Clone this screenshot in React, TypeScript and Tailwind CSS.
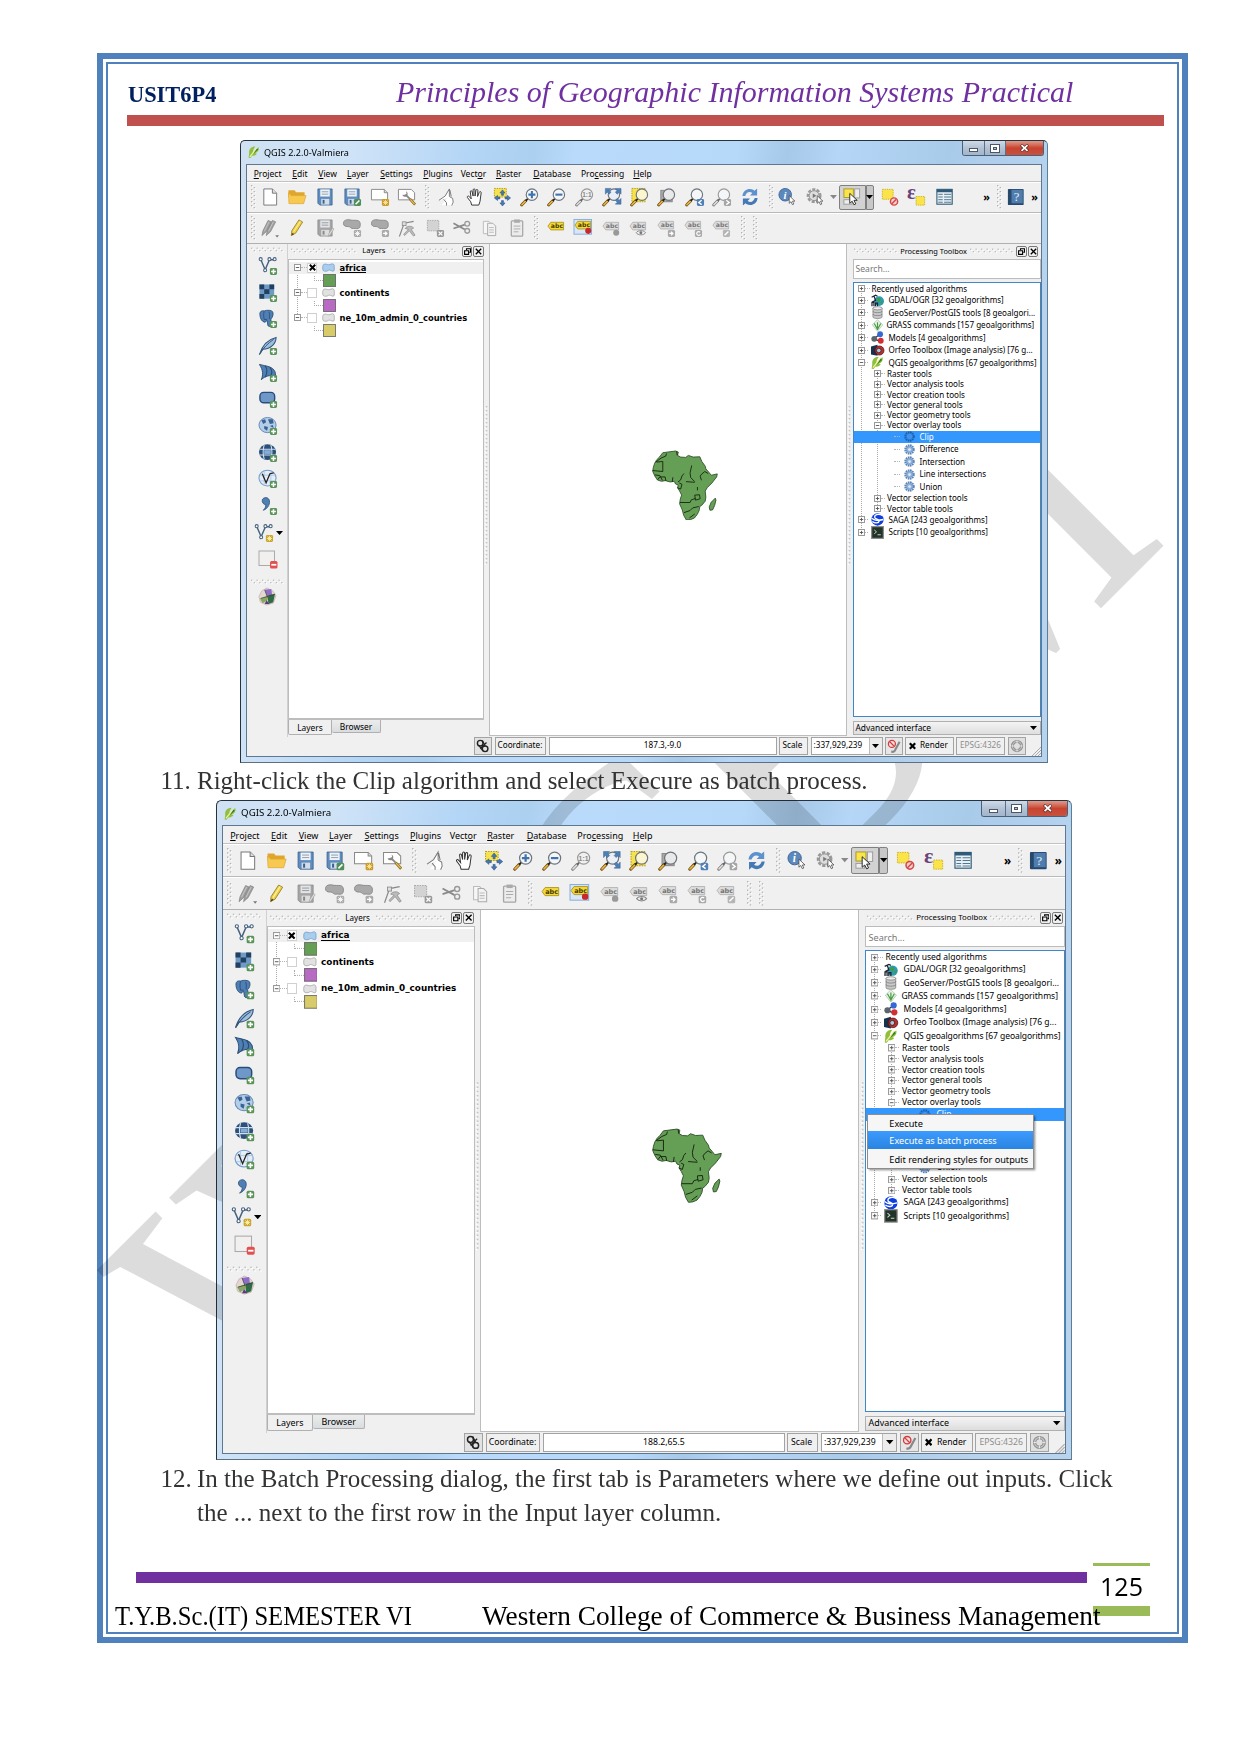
import React from 'react';

type Kids = { children?: React.ReactNode };

/* ---------- small shared drawing helpers ---------- */

function Ico({ children, s = 20 }: Kids & { s?: number }) {
  return (
    <svg viewBox="0 0 20 20" width={s} height={s} className="block shrink-0 overflow-visible" fill="none">
      {children}
    </svg>
  );
}

function VGrip({ className = '' }: { className?: string }) {
  return (
    <svg width="5" height="24" viewBox="0 0 5 24" className={'block shrink-0 ' + className}>
      {[0, 1, 2, 3, 4, 5].map((i) => (
        <g key={i}>
          <rect x="0" y={i * 4} width="1.4" height="1.4" fill="#b5b5b5" />
          <rect x="1" y={i * 4 + 1} width="1.2" height="1.2" fill="#fff" />
          <rect x="2.6" y={i * 4 + 2} width="1.4" height="1.4" fill="#b5b5b5" />
          <rect x="3.6" y={i * 4 + 3} width="1.2" height="1.2" fill="#fff" />
        </g>
      ))}
    </svg>
  );
}

function HGrip({ n }: { n: number }) {
  return (
    <svg width={n * 5.5} height="6" viewBox={`0 0 ${n * 5.5} 6`} className="block shrink-0">
      {Array.from({ length: n }, (_, i) => (
        <g key={i}>
          <rect x={i * 5.5} y="0.6" width="1.3" height="1.3" fill="#bcbcbc" />
          <rect x={i * 5.5 + 1.2} y="1.7" width="1.3" height="1.3" fill="#fff" />
          <rect x={i * 5.5 + 2.7} y="3" width="1.3" height="1.3" fill="#bcbcbc" />
          <rect x={i * 5.5 + 3.8} y="4" width="1.3" height="1.3" fill="#fff" />
        </g>
      ))}
    </svg>
  );
}

function Splitter() {
  return (
    <svg width="3" height="160" viewBox="0 0 3 160" className="block">
      {Array.from({ length: 40 }, (_, i) => (
        <g key={i}>
          <rect x="0.8" y={i * 4} width="1.5" height="1.5" fill="#c4c4c4" />
          <rect x="0" y={i * 4 + 1.5} width="1.4" height="1.2" fill="#fff" />
        </g>
      ))}
    </svg>
  );
}

const Down = ({ c = '#000' }: { c?: string }) => (
  <svg width="7" height="4" viewBox="0 0 7 4" className="block shrink-0">
    <path d="M0 0h7L3.500 4z" fill={c} />
  </svg>
);

const Cursor = () => <path d="M10.500 8.500v8.500l2-1.800 1.500 3.300 1.600-.7-1.500-3.200h2.700z" fill="#fff" stroke="#444" strokeWidth=".8" />;
const Handle = ({ g }: { g?: boolean }) => (
  <>
    <path d="M1.200 18.500 5.500 14" stroke={g ? '#777' : '#6b4b10'} strokeWidth="3" strokeLinecap="round" />
    <path d="M1.500 18.200 5 14.600" stroke={g ? '#ddd' : '#e9b63f'} strokeWidth="1.700" strokeLinecap="round" />
    <path d="M5.500 14 8 11.500" stroke={g ? '#666' : '#222'} strokeWidth="1.800" />
  </>
);
const Lens = ({ f = '#f4f6f8', g }: { f?: string; g?: boolean }) => (
  <>
    <Handle g={g} />
    <circle cx="12" cy="7.500" r="6" fill={f} stroke={g ? '#999' : '#6d747b'} strokeWidth="1.200" />
  </>
);
const Badge = ({ c, children }: Kids & { c: string }) => (
  <>
    <rect x="12" y="12" width="7.500" height="7.500" rx="1.500" fill={c} />
    {children}
  </>
);
const Plus = () => (
  <Badge c="#5a9459">
    <path d="M15.750 13.300v5M13.300 15.750h5" stroke="#fff" strokeWidth="1.600" />
  </Badge>
);
const Floppy = ({ g }: { g?: boolean }) => (
  <>
    <path d="M2.500 1.500h15v17h-13l-2-2z" fill={g ? '#a5a5a5' : '#5f8cbf'} stroke={g ? '#8a8a8a' : '#3d618c'} strokeWidth=".8" />
    <rect x="5" y="2" width="10" height="7.500" fill={g ? '#e4e4e4' : '#eef3f8'} />
    <path d="M6.500 4.500h7M6.500 7h7" stroke="#8795a5" strokeWidth=".9" />
    <rect x="6" y="12" width="8.500" height="6" fill={g ? '#ddd' : '#d3dde8'} />
    <rect x="7.500" y="13" width="2" height="4" fill={g ? '#888' : '#3d618c'} />
  </>
);
const Tag = ({ c, s }: { c: string; s: string }) => (
  <>
    <path d="M1.500 7 4.500 3h13.500v8H4.500z" fill={c} stroke={s} strokeWidth=".8" />
    <text x="4.600" y="9.300" fontSize="6.500" fontWeight="700" fill={s === '#aaa' ? '#777' : '#4a3c00'} fontFamily="DejaVu Sans, sans-serif">
      abc
    </text>
  </>
);
const Blob = ({ f, s }: { f: string; s: string }) => (
  <path d="M1 5.500C1 2 4 .8 7 2c2.500 1 4.500.8 7-.3 3.500-1.500 5.500.8 5 4.300v5c-.5 2.500-3 2-5 .8-2.300-1.200-4-.8-5.500.5C5 13.500.8 13 1 9.500z" fill={f} stroke={s} strokeWidth=".9" />
);
const GreyBlob = () => (
  <path d="M1 5C1 1.500 5 .8 8 1.500c3 .7 5 .2 7.500.5 3.500.5 3.500 4 3 6.500-.4 2-3 2.500-5 2-1.500-.4-2 .5-3.500 0C8.500 10 8 8.500 6 8.500 3 8.500 1 8 1 5z" fill="#a9a9a9" stroke="#858585" strokeWidth=".9" />
);

/* ---------- toolbar icons ---------- */

const fileRow = [
  <Ico key="n"><path d="M3.500 1.500h9l4.500 4.500v12.500H3.500z" fill="#fff" stroke="#777" /><path d="M12.500 1.500V6H17" fill="#ddd" stroke="#777" /></Ico>,
  <Ico key="o"><path d="M1 3h6.500l1.500 2h9v5H1z" fill="#dfa52d" /><path d="M1.500 17 1 5.500l3 3h15.500l-2.500 8.500z" fill="#f8c950" stroke="#dca634" strokeWidth=".7" /></Ico>,
  <Ico key="s"><Floppy /></Ico>,
  <Ico key="sa"><Floppy /><Badge c="#4f8f5a"><path d="m13.800 17.700 4-4" stroke="#fff" strokeWidth="1.600" /></Badge></Ico>,
  <Ico key="c"><path d="M1 2h13.500l3.500 3.500V13H1z" fill="#fff" stroke="#888" /><path d="M14.500 2v3.500H18" stroke="#888" fill="#ddd" /><Badge c="#c99a2b"><path d="M15.750 13v5.500M13 15.750h5.500M13.800 13.800l4 4M17.800 13.800l-4 4" stroke="#ffe9a0" strokeWidth=".9" /></Badge></Ico>,
  <Ico key="cm"><path d="M1 2h13.500l3.500 3.500V13H1z" fill="#fff" stroke="#888" /><path d="M5 8a3 3 0 1 0 4-4l.5 2.500-2 1z" fill="#888" /><path d="m9 8 4 4" stroke="#888" strokeWidth="2" /><path d="m13 12 5.500 6" stroke="#8a6a20" strokeWidth="2.800" /><path d="m13.500 12.500 4.500 5" stroke="#efc14d" strokeWidth="1.300" /></Ico>,
];

const navRow = [
  <Ico key="t"><path d="M4.500 18.500 11 10 7 12l-5 1 6-4 5-7v8l3.500 2 .5 6.500z" fill="#fff" /><path d="M1.500 13.500 8 9l4.500-7.500v8M9.500 19v-3L6.500 12.500M12.500 9.500 16 11.500l.5 4-1.500 3.500M13 2.500l1.500 7" stroke="#777" strokeWidth="1" /></Ico>,
  <Ico key="p"><path d="M6.500 18.500 5.500 15 2 10.500c-.5-1.500 1-2 2-1L6 12 5 4.500c0-1.500 1.800-1.500 2 0L8 9V2.500c.2-1.500 2-1.500 2 0V9l1-6c.3-1.300 1.900-1.200 2 0l-.3 6.500L14.500 5c.5-1.200 2-.8 2 .5l-1.200 9L14 18.500z" fill="#fff" stroke="#333" /></Ico>,
  <Ico key="ps"><rect x="2" y="1" width="12.500" height="9" fill="#f6e24c" stroke="#b79c18" strokeDasharray="1.500 1" /><path d="m10.500 2.500 2.700 3.300h-1.700v2.400h-2V5.800H7.800zM10.500 19.500l2.700-3.300h-1.700v-2.400h-2v2.400H7.800zM2 11l3.300-2.700V10h2.400v2H5.300v1.700zM19 11l-3.300-2.700V10h-2.400v2h2.400v1.700z" fill="#4678b4" stroke="#2d5588" strokeWidth=".6" /></Ico>,
  <Ico key="zi"><Lens /><path d="M12 3.800v7.400M8.300 7.500h7.400" stroke="#3f73b0" strokeWidth="2.200" /></Ico>,
  <Ico key="zo"><Lens /><path d="M8.300 7.500h7.400" stroke="#3f73b0" strokeWidth="2.200" /></Ico>,
  <Ico key="z1"><Lens g f="#f0f0f0" /><text x="7" y="10" fontSize="6.800" fontWeight="700" fill="#888" fontFamily="Liberation Sans, sans-serif">1:1</text></Ico>,
  <Ico key="zf"><Lens f="#eaf0f6" /><path d="M3 1h6L7 3l2 2-2 2-2-2-2 2zM19.500 1h-6l2 2-2 2 2 2 2-2 2 2zM19.500 17.500h-6l2-2-2-2 2-2 2 2 2-2z" fill="#4f7fb8" stroke="#35618f" strokeWidth=".5" /></Ico>,
  <Ico key="zs"><rect x="1.500" y="1" width="14" height="14" fill="#f6e24c" stroke="#b79c18" strokeDasharray="1.500 1" /><Lens f="#fbf6cf" /></Ico>,
  <Ico key="zl"><rect x="3.500" y="3" width="12" height="12" fill="#aaa" stroke="#888" /><Lens f="#e9e9e9" /></Ico>,
  <Ico key="zp"><Lens /><Badge c="#4f80b8"><path d="m17 13.500-3 2.250 3 2.250" stroke="#fff" strokeWidth="1.400" /></Badge></Ico>,
  <Ico key="zn"><Lens g /><Badge c="#a5a5a5"><path d="m14.500 13.500 3 2.250-3 2.250" stroke="#fff" strokeWidth="1.400" /></Badge></Ico>,
  <Ico key="r"><path d="M2 9c.5-5 4-7.500 8-7.500 2 0 3.500.8 4.800 1.800L17.500 1v7.500H10l2.500-2.700C9 3.500 6 5.500 5 9z" fill="#5b92cd" /><path d="M18 11c-.5 5-4 7.500-8 7.500-2 0-3.500-.8-4.800-1.800L2.500 19v-7.500H10l-2.500 2.700c3.500 2.300 6.500.3 7.500-3.200z" fill="#4379b5" /></Ico>,
];

const editRow = [
  <Ico key="pp"><path d="m1.500 18 1-5L8 2l3.500 1.500L6 14zM6 18l1-5 5.500-11L16 3.500 10.500 14z" fill="#a0a0a0" stroke="#808080" strokeWidth=".7" /><path d="m4 13.500 5-10M8.500 13.500l5-10" stroke="#c4c4c4" /><path d="M15.500 17.500h4L17.500 20z" fill="#777" /></Ico>,
  <Ico key="pe"><path d="m4 18 .5-5L12 1.500l4 2.200L8.500 15.500z" fill="#f0d143" stroke="#8b7420" strokeWidth=".8" /><path d="m6.500 14 7-11" stroke="#fff6b0" /><path d="m4 18 1.200-2.800 1.800 1z" fill="#333" /></Ico>,
  <Ico key="sv"><Floppy g /><path d="m13.500 19 .5-3 4-6 1.500 1-4 6z" fill="#ddd" stroke="#999" strokeWidth=".6" /></Ico>,
  <Ico key="ad"><GreyBlob /><Badge c="#aaa"><path d="M15.750 13v5.500M13 15.750h5.500M13.800 13.800l4 4M17.800 13.800l-4 4" stroke="#fff" strokeWidth=".9" /></Badge></Ico>,
  <Ico key="mv"><GreyBlob /><Badge c="#aaa"><path d="M13.300 15.750h4m-2-2 2 2-2 2" stroke="#fff" strokeWidth="1.300" /></Badge></Ico>,
  <Ico key="nd"><path d="M2 19 7 5l10-2" stroke="#888" strokeWidth="1.200" /><rect x="5" y="3.500" width="4" height="4" fill="#ddd" stroke="#888" strokeWidth=".8" /><path d="M8 10.500c2-3 7-3 9-.5l-2.500 1.500 4 6-1.700 1-4.300-5.500-5 5-1-1.500 5-5z" fill="#bbb" stroke="#888" strokeWidth=".7" /></Ico>,
  <Ico key="dl"><rect x="2" y="2" width="12" height="11" fill="#d3d3d3" stroke="#aaa" strokeDasharray="1.500 1" /><Badge c="#999"><path d="m13.800 13.800 4 4m0-4-4 4" stroke="#fff" strokeWidth="1.300" /></Badge></Ico>,
  <Ico key="cu"><path d="m1 5 12 6.500M1 10.500l12-4" stroke="#8a8a8a" strokeWidth="1.800" /><circle cx="15.500" cy="5.500" r="2.500" stroke="#999" strokeWidth="1.400" /><circle cx="15.500" cy="13" r="2.500" stroke="#999" strokeWidth="1.400" /></Ico>,
  <Ico key="co"><path d="M3 3h6l3 3v10H3z" fill="#f6f6f6" stroke="#bbb" /><path d="M7.500 5h5.500l3 3v10H7.500z" fill="#f3f3f3" stroke="#aaa" /><path d="M9 9.500h5M9 12h5M9 14.500h5" stroke="#bbb" /></Ico>,
  <Ico key="pa"><rect x="4" y="2.500" width="12" height="16" rx="1" fill="#ececec" stroke="#a5a5a5" strokeWidth="1.300" /><rect x="7" y="1" width="6" height="3.500" fill="#aaa" /><path d="M6.500 8h7M6.500 11h7M6.500 14h5" stroke="#aaa" /></Ico>,
];

const labelRow = [
  <Ico key="1"><g transform="translate(0 1)"><Tag c="#f3d93a" s="#a58a16" /></g></Ico>,
  <Ico key="2"><rect x=".5" y="1" width="18.500" height="15.500" fill="#d9e6f6" stroke="#83aede" /><Tag c="#f3d93a" s="#a58a16" /><circle cx="15.500" cy="13" r="3.200" fill="#c8282c" /></Ico>,
  <Ico key="3"><g transform="translate(0 1)"><Tag c="#ddd" s="#aaa" /></g><circle cx="15.500" cy="15" r="3.200" fill="#999" /></Ico>,
  <Ico key="4"><g transform="translate(0 1)"><Tag c="#ddd" s="#aaa" /></g><path d="M8 15c2-3 8-3 10 0-2 3-8 3-10 0z" fill="#eee" stroke="#888" /><circle cx="13" cy="15" r="1.500" fill="#777" /></Ico>,
  <Ico key="5"><Tag c="#ddd" s="#aaa" /><Badge c="#aaa"><path d="M13.300 15.750h4m-2-2 2 2-2 2" stroke="#fff" strokeWidth="1.300" /></Badge></Ico>,
  <Ico key="6"><Tag c="#ddd" s="#aaa" /><Badge c="#aaa"><path d="M17.500 14.500a2 2 0 1 0 .3 2" stroke="#fff" strokeWidth="1.200" /></Badge></Ico>,
  <Ico key="7"><Tag c="#ddd" s="#aaa" /><Badge c="#b5b5b5"><path d="m13.800 17.700 4-4" stroke="#fff" strokeWidth="1.400" /></Badge></Ico>,
];

const Vee = ({ c = '#44617f' }: { c?: string }) => (
  <>
    <path d="M2.500 3.500 7 14l4.500-10.500H17" stroke={c} strokeWidth="1.500" />
    <g fill="#fff" stroke={c} strokeWidth="1.100">
      <circle cx="2.300" cy="2.800" r="1.600" /><circle cx="11.500" cy="2.800" r="1.600" /><circle cx="17" cy="2.800" r="1.600" /><circle cx="7" cy="14.500" r="1.600" />
    </g>
  </>
);

const sideRow = [
  <Ico key="v"><Vee /><Plus /></Ico>,
  <Ico key="r"><path d="M1 1h15.500v15H1z" fill="#6f9ac8" /><path d="M1 1h5v5H1zM11.500 1h5v5h-5zM6 6h5.500v5H6zM1 11h5v5H1z" fill="#23405f" /><Plus /></Ico>,
  <Ico key="p"><path d="M1.500 6C1 2 3 1 6 1.500c3-1.200 8-.8 9 1 1 3-.3 6-2 7.500l.8 7c-1.500 1.500-3.600 1-4-.5l-.6-4.500H8l-1 1.500C3.500 13 2 10 1.500 6z" fill="#4f80b5" stroke="#2b4d74" strokeWidth=".9" /><path d="M6 2c-1 3-.5 6 0 8.500h3M11 2.500c1.200 2.500.5 5 .5 7.500" stroke="#2b4d74" strokeWidth=".9" /><Plus /></Ico>,
  <Ico key="f"><path d="M1 19C4 9 10 3 18.500 1c0 6-5 12-14 12.500z" fill="#9fbede" stroke="#34567d" strokeWidth="1.100" /><path d="M1 19C5 12 10 7 16 3" stroke="#34567d" /><Plus /></Ico>,
  <Ico key="m"><path d="M1 1c8 2 14 2 16.500 8l.5 4c-6-1-11 0-15 4C5 12 5 7 1 1z" fill="#4f80b5" stroke="#2b4d74" /><path d="M7 2.500c3 4 2 8 0 12M12 4c3 4 2 6 1 9" stroke="#2b4d74" strokeWidth="1.200" /><Plus /></Ico>,
  <Ico key="o"><rect x="1.500" y="3" width="15.500" height="11" rx="4" fill="#6f97c8" stroke="#284d7c" strokeWidth="1.500" /><Plus /></Ico>,
  <Ico key="w"><ellipse cx="9.500" cy="9" rx="9" ry="8" fill="#b4cde8" stroke="#6289b5" /><path d="m3 4 4-1 1 3-3 2zM10 3h5l1 4-4 1zM6 10l4 1-1 4-3-2zM12 10l3-1 1 3z" fill="#3b6292" /><Plus /></Ico>,
  <Ico key="g"><ellipse cx="9.500" cy="9" rx="9" ry="8.300" fill="#2c5078" /><path d="M1 6h17M1 12h17M6 1.500c-1.500 5-1.500 10 0 15M13 1.500c1.500 5 1.500 10 0 15" stroke="#cfe0f2" strokeWidth="1.100" /><rect x="6" y="7" width="7" height="4" fill="#86add8" /><Plus /></Ico>,
  <Ico key="wf"><ellipse cx="9.500" cy="9" rx="9" ry="8.300" fill="#e5eef8" stroke="#6f9bcb" strokeWidth="1.100" /><path d="M1 6h17M1 12h17M6 1v16M13 1v16" stroke="#a4c1e0" strokeWidth=".8" /><path d="M4 4.500 8 14l4-9.500 4-1" stroke="#222" strokeWidth="1.300" /><Plus /></Ico>,
  <Ico key="d"><path d="M4 3.500C5 1 9 0 11 3c2 4-1 10-6 11.500 2-2 3-4 2.500-6C5 8.500 3.500 6 4 3.500z" fill="#4f80b5" stroke="#2b4d74" strokeWidth=".8" /><Plus /></Ico>,
];

/* ---------- window pieces ---------- */

const BarButtons = () => (
  <div className="mr-[4px] flex h-[15px] overflow-hidden rounded-b-[3px] border border-t-0 border-[#4c5f78]">
    <div className="flex w-[22px] items-end justify-center border-r border-[#5b6f88] bg-gradient-to-b from-[#cfdae8] via-[#b3c2d5] to-[#a3b5ca] pb-[3px]">
      <div className="h-[4px] w-[9px] border border-[#4b5666] bg-white" />
    </div>
    <div className="flex w-[21px] items-center justify-center border-r border-[#5b6f88] bg-gradient-to-b from-[#cfdae8] via-[#b3c2d5] to-[#a3b5ca]">
      <div className="flex h-[9px] w-[10px] items-center justify-center border border-[#4b5666] bg-white">
        <div className="h-[3px] w-[4px] border border-[#4b5666] bg-[#b3c2d5]" />
      </div>
    </div>
    <div className="flex w-[37px] items-center justify-center bg-gradient-to-b from-[#dd9a8c] via-[#c8432f] to-[#c55240]">
      <svg width="9" height="8" viewBox="0 0 9 8"><path d="m1 .8 7 6.400M8 .8 1 7.200" stroke="#5b2a2a" strokeWidth="3" /><path d="m1.500 1.200 6 5.600M7.500 1.200l-6 5.600" stroke="#fff" strokeWidth="1.700" /></svg>
    </div>
  </div>
);

const QLogo = ({ s = 12 }: { s?: number }) => (
  <Ico s={s}><path d="M2 12C1 6 5 1 12 1l-3 5-1 6 6-8 4-2c1 6-3 9-6 10l3 1c-3 3-6 4-8 3l-3 4-3-.5z" fill="#8fbf3c" /><path d="M3 18 15 3" stroke="#f3f0a0" strokeWidth="2" /><path d="M9 13 15 4l2 2z" fill="#2f7a35" /></Ico>
);

const menus: [string, string, string, string][] = [
  ['', 'P', 'roject', 'w-[38.600px]'],
  ['', 'E', 'dit', 'w-[26px]'],
  ['', 'V', 'iew', 'w-[28.700px]'],
  ['', 'L', 'ayer', 'w-[33.300px]'],
  ['', 'S', 'ettings', 'w-[43px]'],
  ['', 'P', 'lugins', 'w-[37.400px]'],
  ['Vect', 'o', 'r', 'w-[35.300px]'],
  ['', 'R', 'aster', 'w-[37.300px]'],
  ['', 'D', 'atabase', 'w-[47.700px]'],
  ['Pro', 'c', 'essing', 'w-[52.300px]'],
  ['', 'H', 'elp', 'w-[30px]'],
];

const Slot = ({ children }: Kids) => <div className="flex w-[27.500px] shrink-0 items-center justify-center">{children}</div>;

const Chevrons = () => <span className="text-[11px] font-bold leading-none text-black">»</span>;

function Toolbars() {
  return (
    <>
      <div className="flex h-[31px] items-center border-b border-t border-b-[#b9b9b9] border-t-white">
        <div className="flex w-[9px] shrink-0 justify-end"><VGrip /></div>
        {fileRow.map((x, i) => <Slot key={i}><div className="scale-95">{x}</div></Slot>)}
        <div className="flex w-[12.700px] shrink-0 justify-center"><VGrip /></div>
        {navRow.map((x, i) => <Slot key={i}><div className="scale-95">{x}</div></Slot>)}
        <div className="flex w-[10px] shrink-0 justify-end"><VGrip /></div>
        <Slot>
          <Ico s={18}><circle cx="8" cy="7.500" r="7" fill="#5b88bd" stroke="#3f6796" /><text x="6" y="12" fontSize="12" fontStyle="italic" fontWeight="700" fill="#fff" fontFamily="Liberation Serif, serif">i</text><g transform="translate(2 0)"><Cursor /></g></Ico>
        </Slot>
        <Slot>
          <Ico s={18}><circle cx="9" cy="8.500" r="7" stroke="#999" strokeWidth="2.500" strokeDasharray="3.500 1.500" /><circle cx="9" cy="8.500" r="5.500" fill="#ddd" stroke="#888" /><path d="M7.500 6v5l4-2.500z" fill="#777" /><g transform="translate(2 0)"><Cursor /></g></Ico>
        </Slot>
        <div className="flex w-[9px] shrink-0 justify-center"><Down c="#888" /></div>
        <div className="ml-px flex h-[25px] w-[27px] shrink-0 items-center justify-center rounded-l-[2px] border border-[#808080] bg-[#d2d2d2]">
          <Ico s={18}><rect x="1" y="1" width="10.500" height="9.500" fill="#f8e54b" stroke="#a89326" /><rect x="13" y="1" width="5.500" height="10" fill="#eee" stroke="#999" /><rect x="1" y="13" width="9" height="5" fill="#eee" stroke="#999" /><path d="M7.500 6v11l2.700-2.300 2 4 2-1-2-4h3.600z" fill="#fff" stroke="#222" /></Ico>
        </div>
        <div className="flex h-[25px] w-[8.500px] shrink-0 items-center justify-center rounded-r-[2px] border border-[#808080] bg-[#c8c8c8]"><Down /></div>
        <div className="w-[2px] shrink-0" />
        <Slot>
          <Ico s={18}><rect x="1.500" y="1.500" width="12" height="11" fill="#fbe44a" stroke="#cdb021" strokeDasharray="1.500 1" /><circle cx="14.500" cy="15" r="4" fill="#f6cfcf" stroke="#d34848" strokeWidth="1.600" /><path d="m12 17.500 5-5" stroke="#d34848" strokeWidth="1.600" /></Ico>
        </Slot>
        <Slot>
          <Ico s={18}><text x="-1" y="12.500" fontSize="23" fontWeight="700" fill="#6b4379" fontFamily="Liberation Serif, serif">ε</text><rect x="9" y="9.500" width="9.500" height="9.500" fill="#fbe44a" stroke="#cdb021" strokeDasharray="1.500 1" /></Ico>
        </Slot>
        <Slot>
          <Ico s={18}><rect x="1" y="1.500" width="17" height="16.500" fill="#e9f0f5" stroke="#2f5a78" strokeWidth="1.200" /><path d="M1 3.200h17" stroke="#2f5a78" strokeWidth="3" /><path d="M2.500 7h5M2.500 10h5M2.500 13h5M2.500 15.800h5M9 7h8M9 10h8M9 13h8M9 15.800h8" stroke="#52788f" strokeWidth="1.100" /></Ico>
        </Slot>
        <div className="ml-[24.500px] w-[12px] shrink-0"><Chevrons /></div>
        <div className="ml-[1.500px] w-[9px] shrink-0"><VGrip /></div>
        <div className="ml-[1.500px] shrink-0">
          <Ico s={18}><rect x="1" y="1" width="17.500" height="18" rx="1" fill="#27496b" /><rect x="5" y="2" width="12.500" height="15" fill="#4f7dad" /><text x="7.500" y="14.500" fontSize="14" fill="#e8f1fa" fontFamily="Liberation Serif, serif">?</text></Ico>
        </div>
        <div className="ml-[6px] shrink-0"><Chevrons /></div>
      </div>
      <div className="flex h-[31px] items-center border-b border-t border-b-[#b0b0b0] border-t-white">
        <div className="flex w-[9px] shrink-0 justify-end"><VGrip /></div>
        {editRow.map((x, i) => <Slot key={i}><div className="scale-95">{x}</div></Slot>)}
        <div className="flex w-[11.200px] shrink-0 justify-center"><VGrip /></div>
        {labelRow.map((x, i) => <Slot key={i}><div className="scale-95">{x}</div></Slot>)}
        <div className="ml-[6px] flex gap-[7px]"><VGrip /><VGrip /></div>
      </div>
    </>
  );
}

const DockButtons = () => (
  <div className="flex gap-px">
    <div className="flex h-[10.500px] w-[10.500px] items-center justify-center rounded-[2px] border border-[#777]">
      <svg width="7" height="7" viewBox="0 0 7 7" fill="none"><path d="M2.500 2V.8h4v3.500H5.200" stroke="#000" strokeWidth="1.100" /><path d="M.6 2.800h4v3.600h-4z" stroke="#000" strokeWidth="1.100" /></svg>
    </div>
    <div className="flex h-[10.500px] w-[10.500px] items-center justify-center rounded-[2px] border border-[#777]">
      <svg width="7" height="7" viewBox="0 0 7 7"><path d="m.8.8 5.400 5.400M6.200.8.800 6.200" stroke="#000" strokeWidth="1.300" /></svg>
    </div>
  </div>
);

const Expander = ({ minus }: { minus?: boolean }) => (
  <svg width="7" height="7" viewBox="0 0 7 7" className="relative block shrink-0 bg-white" fill="none">
    <rect x=".5" y=".5" width="6" height="6" stroke="#9a9a9a" />
    <path d={minus ? 'M1.800 3.500h3.400' : 'M1.800 3.500h3.400M3.500 1.800v3.400'} stroke="#555" strokeWidth=".9" />
  </svg>
);

const Dots = ({ className }: { className: string }) => <div className={'shrink-0 border-t border-dotted border-[#b5b5b5] ' + className} />;

function LayerItem({ name, color, checked, current }: { name: string; color: string; checked?: boolean; current?: boolean }) {
  return (
    <div className="h-[25px]">
      <div className={'flex h-[12.500px] items-center pl-[5px] ' + (current ? 'bg-[#f0f0f0]' : '')}>
        <Expander minus />
        <Dots className="w-[6px]" />
        <div className="flex h-[10px] w-[10px] shrink-0 items-center justify-center border border-[#d0d0d0] bg-white">
          {checked && <svg width="7" height="7" viewBox="0 0 7 7"><path d="m.8.8 5.400 5.400M6.200.8.800 6.200" stroke="#000" strokeWidth="2" /></svg>}
        </div>
        <div className="ml-[5px] mr-[4.500px]">
          <svg width="13" height="9" viewBox="0 0 20 14" className="block overflow-visible"><Blob f={current ? '#a8cdee' : '#e2e2e2'} s={current ? '#5f8db8' : '#8e8e8e'} /></svg>
        </div>
        <span className={"mt-px whitespace-nowrap font-['DejaVu_Sans',sans-serif] text-[8.350px] font-bold leading-[8.500px] " + (current ? 'border-b border-black' : '')}>{name}</span>
      </div>
      <div className="flex h-[12.500px] items-center pl-[25px]">
        <div className="h-[5px] w-[9px] -translate-y-[2px] border-b border-l border-dotted border-[#aaa]" />
        <svg width="13" height="13" viewBox="0 0 13 13" className="block"><rect x=".5" y=".5" width="12" height="12" fill={color} stroke="#555" strokeOpacity=".75" /></svg>
      </div>
    </div>
  );
}

const Gear = ({ hi }: { hi?: boolean }) => (
  <Ico s={11}>
    <circle cx="10" cy="10" r="8" stroke={hi ? '#1c5fae' : '#5a85bb'} strokeWidth="3" strokeDasharray="3 1.200" />
    <circle cx="10" cy="10" r="6" fill={hi ? '#3e93ee' : '#90b3dc'} stroke={hi ? '#1c5fae' : '#4a76ac'} />
    <circle cx="10" cy="10" r="2.500" fill={hi ? '#3e93ee' : '#dfeaf6'} />
  </Ico>
);

const providerIcons: Record<string, React.ReactNode> = {
  gdal: <Ico s={13}><circle cx="12.500" cy="11" r="7.500" fill="#2f9ab0" /><path d="m8 8 5-3 2 4-3 4zM15 12l4-1-2 5z" fill="#3f9b4a" /><path d="M1.500 19v-6h3v6M7 19v-5h3v5M1 5l6-3 3 1.500M5 4l2 6-5 2" stroke="#1b2430" strokeWidth="1.900" /></Ico>,
  db: <Ico s={13}><path d="M3 3v14c0 3 14 3 14 0V3z" fill="#c9c9c9" stroke="#6e6e6e" /><ellipse cx="10" cy="3.500" rx="7" ry="2.500" fill="#eee" stroke="#6e6e6e" /><path d="M3 8c0 3 14 3 14 0M3 12.500c0 3 14 3 14 0" stroke="#6e6e6e" /></Ico>,
  grass: <Ico s={13}><path d="m10 1 8 8-8 10L2 9z" fill="#eaf4e6" stroke="#9bbf95" /><path d="M10 17V5M10 16 5 7M10 16l5-9" stroke="#4b9a48" strokeWidth="1.800" /></Ico>,
  models: <Ico s={13}><path d="M4 12 14 5M5 12l9 4" stroke="#333" strokeWidth="2" /><circle cx="5" cy="12" r="4.500" fill="#5b6570" /><circle cx="14" cy="5" r="4.500" fill="#3569d6" /><circle cx="15" cy="15" r="4.500" fill="#d32f35" /></Ico>,
  orfeo: <Ico s={13}><path d="M0 4 10 1v17L0 16z" fill="#17324d" /><circle cx="13" cy="10" r="7" fill="#c32a2a" stroke="#341111" /><circle cx="12" cy="10" r="3.500" fill="#a8c6de" stroke="#111" /></Ico>,
  qgis: <QLogo s={13} />,
  saga: <Ico s={13}><circle cx="10" cy="10" r="9.500" fill="#0d3ee0" /><path d="M18 4C11 0 4 3 6 7.500c1.500 2.500 7 1.500 6.500 5C12 16 6 16 2 13M1 8c5 4 9 4 18 2" stroke="#fff" strokeWidth="2" /></Ico>,
  scripts: <Ico s={13}><rect x="1" y="1" width="18" height="18" fill="#223328" stroke="#8a8a8a" strokeWidth="1.800" /><path d="m5 6 3.500 3L5 12M10 13.500h5" stroke="#c9d8cb" strokeWidth="1.500" /></Ico>,
};

const Root = ({ icon, label, minus, tight }: { icon: string; label: string; minus?: boolean; tight?: boolean }) => (
  <div className="flex h-[12.500px] items-center pl-[4px]">
    <Expander minus={minus} /><Dots className="mr-[3px] w-[3px]" />
    {providerIcons[icon]}
    <span className={'whitespace-pre ' + (tight ? 'ml-[3px]' : 'ml-[5px]')}>{label}</span>
  </div>
);
const Group = ({ label, minus }: { label: string; minus?: boolean }) => (
  <div className="flex h-[10.300px] items-center pl-[20px]">
    <Expander minus={minus} /><Dots className="mr-[2.500px] w-[4px]" /><span className="whitespace-pre">{label}</span>
  </div>
);
const Leaf = ({ label, hi }: { label: string; hi?: boolean }) => (
  <div className={'flex h-[12.500px] items-center pl-[40px] ' + (hi ? 'bg-[#3397fd] text-white' : '')}>
    <Dots className="mr-[4px] w-[6px]" /><Gear hi={hi} /><span className="ml-[5px] whitespace-pre">{label}</span>
  </div>
);

const Africa = () => (
  <svg width="66" height="70" viewBox="95 62 196 208" className="block" fill="#659f56" stroke="#2b4a26" strokeWidth="2.500" strokeLinejoin="round">
    <path d="M127 70 165 65l8 3-2 10 9 5 15 1 8-6 14 5 20-1 6 14 10 14 2 8 8 9 8 10 18-4-2 9-14 18-14 14-6 10 2 18-2 12-10 12-6 4-2 12-6 12-8 10-12 5-12 1-8-14-4-16-8-18 2-14 4-12-6-12-6-10 2-8-8-3-4-8-12 2-14-4-12 2-12-4-8-12-6-14 2-12 4-12 6-10 8-8z" />
    <path d="m283 205 2 6-4 16-6 13-8 1-2-10 6-14z" />
    <path d="M138 72l-2 8-14 6-16 12M97 123l30 3 0-30-18 2M104 136l14 2 8 14M112 150l6-8 16 0 2 12M155 157l2-14M172 157l8-6 4-12 6-7M168 66l2 12M213 108l-5 22 2 14 12 12M222 158l-26-2M242 134l10-8 10 6M242 152l-4-12 4-6M230 172l0 10M176 160l8 4-4 14-10-4M222 196l14-1 2 12-14 4zM178 218l30 0 4-8 12-4M190 248l18-6 8-8 18-4M206 264l16-12" fill="none" stroke="#16210f" strokeWidth="2.600" />
  </svg>
);

const Cell = ({ children, className = '' }: Kids & { className?: string }) => (
  <div className={'flex h-[18px] shrink-0 items-center border border-[#a3a3a3] text-[8.200px] ' + className}>{children}</div>
);

function ContextMenu() {
  return (
    <div className="absolute left-[614px] top-[296px] h-[52px] w-[157.500px] border border-[#8d8d8d] bg-[#f6f6f6] text-[8.650px] shadow-[2px_2px_2px_rgba(0,0,0,0.45)]">
      <div className="flex h-[15.500px] items-center pl-[20px]">Execute</div>
      <div className="flex h-[16.500px] items-center bg-gradient-to-b from-[#3c9bff] to-[#2a84e0] pl-[20px] text-white">Execute as batch process</div>
      <div className="flex h-[19px] items-center whitespace-nowrap pl-[20px] pt-px">Edit rendering styles for outputs</div>
    </div>
  );
}

function QgisWindow({ coord, menu, glass }: { coord: string; menu?: boolean; glass?: boolean }) {
  return (
    <div className="relative h-[622.500px] w-[807.500px] font-['Noto_Sans','Open_Sans',sans-serif] text-[8.050px] leading-none text-black">
      <div className={'absolute inset-0 rounded-t-[5px] border border-[#27323f] border-b-[#5d6f80] border-r-[#5d7f95] bg-[linear-gradient(100deg,#cfe1f3_0px,#cfe3f7_110px,#b3d5f6_230px,#acd0f0_290px,#b9dafa_330px,#b7d9f9_490px,#a6c8e9_540px,#b5d6f6_590px,#a9cbea_700px,#b7d3ee_807px)] ' + (glass ? 'mix-blend-multiply' : '')} />
      <div className="relative flex h-full flex-col px-[6px] pb-[6px] pt-px">
        <div className="flex h-[22.500px] justify-between">
          <div className="flex items-center gap-[4.500px] pl-[1.500px]"><QLogo /><span className="text-[9.100px]">QGIS 2.2.0-Valmiera</span></div>
          <div className="-mr-[6px]"><BarButtons /></div>
        </div>
        <div className="flex min-h-0 flex-1 flex-col border border-[#60788f] bg-[#f0f0f0]">
          <div className="flex h-[17px] items-center border-b border-[#c2c2c2] pl-[6.700px] pt-[2.500px] text-[8.500px]">
            {menus.map(([a, u, b, w], i) => <div key={i} className={'shrink-0 ' + w}>{a}<span className="underline decoration-1 underline-offset-1">{u}</span>{b}</div>)}
          </div>
          <Toolbars />
          <div className="flex min-h-0 flex-1">
            <div className="flex w-[41px] shrink-0 flex-col items-center border-r border-[#d0d0d0] pl-px pt-[3px]">
              <HGrip n={6} />
              <div className="flex flex-col items-center">
                {sideRow.map((x, i) => <div key={i} className="flex h-[26.700px] items-center"><div className="scale-95">{x}</div></div>)}
                <div className="flex h-[26.700px] items-center gap-[2px] pl-[2px]">
                  <div className="scale-95"><Ico><Vee /><Badge c="#c9a52b"><path d="M15.750 13v5.500M13 15.750h5.500M13.800 13.800l4 4M17.800 13.800l-4 4" stroke="#fff3b8" strokeWidth=".9" /></Badge></Ico></div>
                  <Down />
                </div>
                <div className="flex h-[26.700px] items-center"><Ico><rect x="1" y="2" width="15.500" height="14.500" fill="#f2f0ee" stroke="#aaa" /><Badge c="#e35050"><path d="M13.300 15.750h5" stroke="#fff" strokeWidth="1.700" /></Badge></Ico></div>
              </div>
              <div className="mt-[6px]"><HGrip n={6} /></div>
              <div className="mt-[2.500px]"><Ico s={19}><path d="m9.500 1 6 3 3.500 5-3 8-7 2-6.500-3L1 10l3-6z" fill="#e4d6d3" stroke="#c5a8a8" strokeWidth=".7" /><path d="m7 3 7-1 1 8-5 1z" fill="#8f6cc9" /><path d="m10 9 8-2-2 9-5 2z" fill="#2f6b45" /><path d="m2 12 9-3-1 5-5 3z" fill="#86a860" /><path d="M9 14l3 4-5 0z" fill="#5a3a86" /><path d="m7 3 3 8M3 12l14-4" stroke="#3c3c3c" strokeWidth=".7" /></Ico></div>
            </div>
            <div className="flex w-[196px] shrink-0 flex-col">
              <div className="flex h-[15.500px] shrink-0 items-center justify-between pl-[3px]">
                <HGrip n={12} /><span className="text-[7.600px]">Layers</span><HGrip n={12} /><DockButtons />
              </div>
              <div className="relative h-[460.500px] shrink-0 border border-b-2 border-[#bdbdbd] bg-white pt-[1.500px]">
                <div className="absolute left-[8px] top-[6px] h-[52px] border-l border-dotted border-[#aaa]" />
                <div className="relative">
                  <LayerItem name="africa" color="#659f56" checked current />
                  <LayerItem name="continents" color="#b76bc2" />
                  <LayerItem name="ne_10m_admin_0_countries" color="#d8cb69" />
                </div>
              </div>
              <div className="flex items-start">
                <div className="flex h-[15.500px] w-[44px] items-center justify-center rounded-b-[2px] border border-t-0 border-[#b0b0b0] pt-[2px] text-[8.400px]">Layers</div>
                <div className="flex h-[13.500px] w-[49px] items-center justify-center rounded-b-[2px] border border-l-0 border-t-0 border-[#b0b0b0] bg-gradient-to-b from-[#ececec] to-[#d9dde0] pt-[2px] text-[8.400px]">Browser</div>
              </div>
            </div>
            <div className="flex w-[5px] shrink-0 justify-center pt-[162px]"><Splitter /></div>
            <div className="h-[492px] w-[357.500px] shrink-0 border-x border-b border-[#bdbdbd] bg-white pl-[161.500px] pt-[206px]"><Africa /></div>
            <div className="flex w-[6px] shrink-0 justify-center pt-[162px]"><Splitter /></div>
            <div className="flex min-w-0 flex-1 flex-col">
              <div className="flex h-[15.500px] shrink-0 items-center justify-between pl-px pr-[2px]">
                <HGrip n={8} /><span className="whitespace-nowrap text-[7.400px]">Processing Toolbox</span><HGrip n={8} /><DockButtons />
              </div>
              <div className="flex h-[19.500px] shrink-0 items-center border border-[#bcbcbc] bg-white pl-[2px] pt-[2px] text-[8.600px] text-[#777]">Search...</div>
              <div className="relative mt-[3px] h-[435.500px] shrink-0 overflow-hidden border border-[#3f86cd] bg-white pt-px">
                <div className="absolute left-[7px] top-[6px] h-[243px] border-l border-dotted border-[#aaa]" />
                <div className="absolute left-[23px] top-[90px] h-[136px] border-l border-dotted border-[#aaa]" />
                <div className="relative">
                  <div className="flex h-[10.300px] items-center pl-[4px]"><Expander /><Dots className="mr-[2px] w-[5px]" />Recently used algorithms</div>
                  <Root icon="gdal" label="GDAL/OGR [32 geoalgorithms]" />
                  <Root icon="db" label="GeoServer/PostGIS tools [8 geoalgori..." />
                  <Root icon="grass" label="GRASS commands [157 geoalgorithms]" tight />
                  <Root icon="models" label="Models [4 geoalgorithms]" />
                  <Root icon="orfeo" label="Orfeo Toolbox (Image analysis) [76 g..." />
                  <div className="tracking-[-0.08px]"><Root icon="qgis" label="QGIS geoalgorithms [67 geoalgorithms]" minus /></div>
                  <Group label="Raster tools" />
                  <Group label="Vector analysis tools" />
                  <Group label="Vector creation tools" />
                  <Group label="Vector general tools" />
                  <Group label="Vector geometry tools" />
                  <Group label="Vector overlay tools" minus />
                  <Leaf label="Clip" hi />
                  <Leaf label="Difference" />
                  <Leaf label="Intersection" />
                  <Leaf label="Line intersections" />
                  <Leaf label="Union" />
                  <Group label="Vector selection tools" />
                  <Group label="Vector table tools" />
                  <Root icon="saga" label="SAGA [243 geoalgorithms]" />
                  <Root icon="scripts" label="Scripts [10 geoalgorithms]" />
                </div>
              </div>
              <div className="mt-[3.500px] flex h-[14.500px] shrink-0 items-center justify-between border border-[#b0b0b0] bg-gradient-to-b from-[#f4f4f4] to-[#dedede] pl-[2px] pr-[3px] text-[8.400px]">
                Advanced interface<Down />
              </div>
            </div>
          </div>
          <div className="flex h-[19px] shrink-0 items-start pl-[227px]">
            <Cell className="w-[18px] justify-center bg-[#e2e2e2]"><Ico s={14}><circle cx="6" cy="6" r="4" stroke="#222" strokeWidth="2" /><circle cx="13" cy="14" r="4" stroke="#222" strokeWidth="2" /><path d="m9 2 4 8M4 9l6 8M6 14l9-9" stroke="#222" strokeWidth="1.800" /></Ico></Cell>
            <Cell className="ml-[2.500px] w-[51px] pl-[2px]">Coordinate:</Cell>
            <Cell className="ml-[3px] w-[228px] justify-center bg-white">{coord}</Cell>
            <Cell className="ml-[2px] w-[29px] pl-[3px]">Scale</Cell>
            <Cell className="ml-[3px] w-[72px] justify-between bg-white pl-[2px]">:337,929,239<span className="flex h-full w-[13px] items-center justify-center border-l border-[#bbb] bg-[#ececec]"><Down /></span></Cell>
            <Cell className="ml-[2.500px] w-[18px] justify-center bg-[#e6e6e6]"><Ico s={14}><path d="M6 18c3 1 5 0 6-3l6-11" stroke="#888" strokeWidth="3" /><circle cx="7" cy="7" r="5" stroke="#d23c3c" strokeWidth="1.800" fill="#f5dede" /><path d="m3.500 3.500 7 7" stroke="#d23c3c" strokeWidth="1.800" /></Ico></Cell>
            <Cell className="ml-[2px] w-[49px] gap-[4.500px] pl-[2.500px]"><svg width="7" height="8" viewBox="0 0 7 7"><path d="m.8.8 5.400 5.400M6.200.8.800 6.200" stroke="#000" strokeWidth="2.200" /></svg>Render</Cell>
            <Cell className="ml-[2px] w-[49px] justify-center text-[#8d8d8d]">EPSG:4326</Cell>
            <Cell className="ml-[2.500px] w-[18px] justify-center bg-[#e0e0e0]"><Ico s={14}><circle cx="10" cy="10" r="6.500" stroke="#8d8d8d" strokeWidth="4.500" /><circle cx="10" cy="10" r="6.500" stroke="#c8c8c8" strokeWidth="1.500" /><path d="M10 2v4M10 14v4M2 10h4M14 10h4" stroke="#eee" strokeWidth="1.300" /></Ico></Cell>
            <svg width="10" height="10" viewBox="0 0 10 10" className="ml-auto mt-[9px]"><path d="M1 10 10 1M4 10l6-6M7 10l3-3" stroke="#aaa" /></svg>
          </div>
        </div>
      </div>
      {menu && <ContextMenu />}
    </div>
  );
}

export default function App() {
  return (
    <div className="relative h-[1755px] w-[1241px] overflow-hidden bg-white pl-[97px] pt-[53px] font-['Liberation_Serif',serif]">
      <div className="h-[1590px] w-[1090.500px] border-[6px] border-[#4f81bd] p-[3px]">
        <div className="flex h-full flex-col border-2 border-[#4f81bd]">
          <div aria-hidden="true" className="absolute left-[310px] top-[1484px] whitespace-nowrap mix-blend-multiply">
            <div className="absolute bottom-0 left-0 origin-bottom-left [transform:rotate(-45deg)_scaleY(1.11)] text-[333px] leading-none text-[#dcdcdc]">
              WCCBM
              <span className="absolute left-[99px] top-0">V</span>
            </div>
          </div>
          <div className="relative h-[51px] shrink-0">
            <div className="flex items-baseline pt-[13px]">
              <span className="ml-[20px] w-[268px] text-[22.400px] font-bold leading-none text-[#002060]">USIT6P4</span>
              <span className="whitespace-nowrap text-[30px] italic leading-none text-[#7030a0]">Principles of Geographic Information Systems Practical</span>
            </div>
          </div>
          <div className="relative ml-[19px] h-[10.500px] w-[1037px] shrink-0 bg-[#c0504d]" />
          <div className="ml-[132px] mt-[14.500px] h-[623px] shrink-0"><QgisWindow coord="187.3,-9.0" /></div>
          <div className="relative flex h-[36px] shrink-0 items-center pl-[52.500px] text-[25px] text-[#333]">
            <span className="w-[36.500px]">11.</span><span className="whitespace-nowrap">Right-click the Clip algorithm and select Execure as batch process.</span>
          </div>
          <div className="ml-[107.700px] mt-px h-[661px] shrink-0"><div className="[zoom:1.061]"><QgisWindow coord="188.2,65.5" menu glass /></div></div>
          <div className="relative flex shrink-0 pl-[52.500px] pt-px text-[25px] leading-[34px] text-[#333]">
            <span className="w-[36.500px] shrink-0">12.</span>
            <span className="whitespace-nowrap">In the Batch Processing dialog, the first tab is Parameters where we define out inputs. Click<br />the ... next to the first row in the Input layer column.</span>
          </div>
          <div className="relative mt-auto flex h-[69px] shrink-0">
            <div className="w-[985px] shrink-0">
              <div className="ml-[28px] mt-[9px] h-[10.500px] w-[951px] bg-[#7030a0]" />
              <div className="relative z-10 mt-[15px] flex whitespace-nowrap pl-[7px] text-[28px] leading-[36px] text-black">
                <span className="w-[366.500px] shrink-0"><span className="inline-block origin-left scale-x-[0.88]">T.Y.B.Sc.(IT) SEMESTER VI</span></span>
                <span className="inline-block shrink-0 origin-left scale-x-[0.976]">Western College of Commerce &amp; Business Management</span>
              </div>
            </div>
            <div className="flex w-[57px] flex-col">
              <div className="h-[3px] bg-[#9bbb59]" />
              <div className="h-[40px] text-center font-['Open_Sans',sans-serif] text-[25px] leading-[40px] text-black">125</div>
              <div className="h-[10px] bg-[#9bbb59]" />
            </div>
          </div>
        </div>
      </div>
    </div>
  );
}
